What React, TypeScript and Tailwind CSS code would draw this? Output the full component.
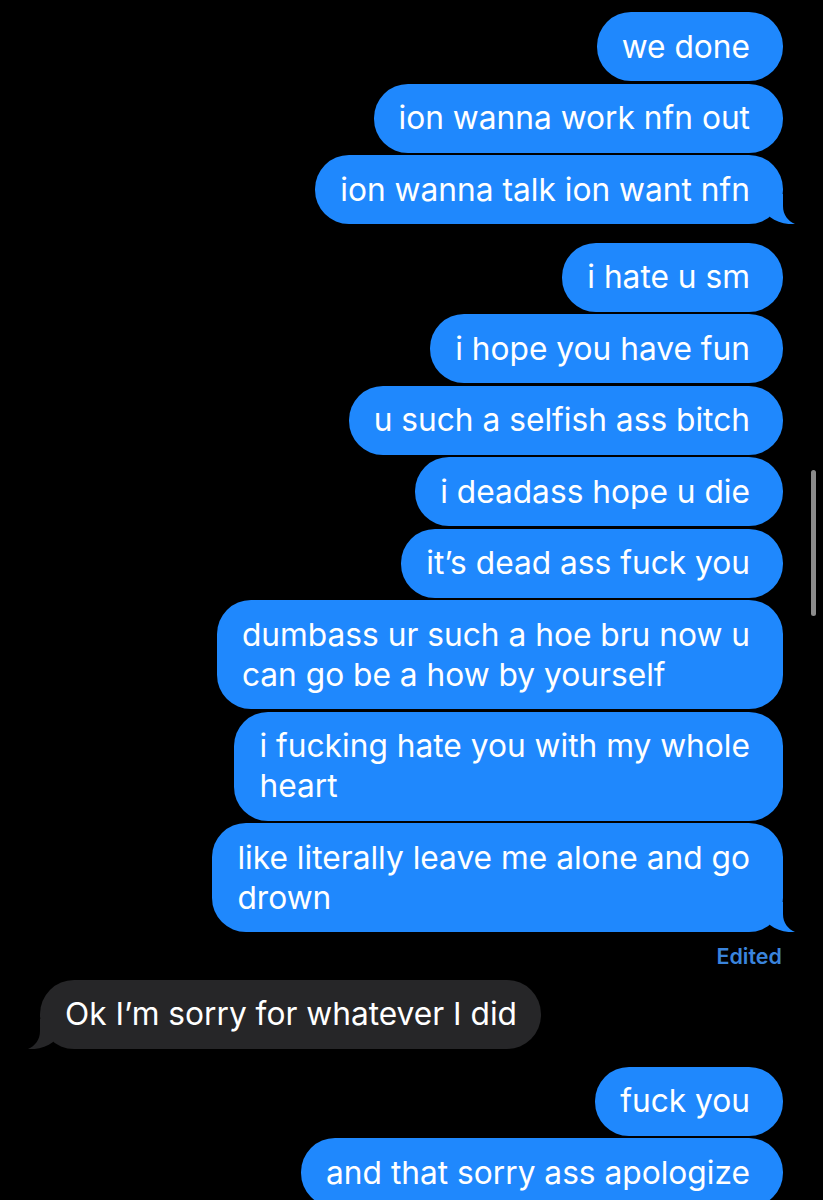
import React from 'react';

type Msg = { lines: string[]; tail?: boolean };

const groupsOut: Msg[][] = [
  [
    { lines: ['we done'] },
    { lines: ['ion wanna work nfn out'] },
    { lines: ['ion wanna talk ion want nfn'], tail: true },
  ],
  [
    { lines: ['i hate u sm'] },
    { lines: ['i hope you have fun'] },
    { lines: ['u such a selfish ass bitch'] },
    { lines: ['i deadass hope u die'] },
    { lines: ['it\u2019s dead ass fuck you'] },
    { lines: ['dumbass ur such a hoe bru now u', 'can go be a how by yourself'] },
    { lines: ['i fucking hate you with my whole', 'heart'] },
    { lines: ['like literally leave me alone and go', 'drown'], tail: true },
  ],
];

const Tail = ({ color, left }: { color: string; left?: boolean }) => (
  <svg
    viewBox="0 0 30 30"
    className={
      left
        ? 'absolute bottom-0 left-[-12px] w-[30px] h-[30px] -scale-x-100'
        : 'absolute bottom-0 right-[-12px] w-[30px] h-[30px]'
    }
  >
    <path d="M18 0 L18 12 C18 21 23 27 30 30 C22 30.8 12 28.5 5 23 L5 0 Z" fill={color} />
  </svg>
);

const Bubble = ({ msg }: { msg: Msg }) => (
  <div className="relative bg-[#1f88fd] rounded-[34px] pl-[25px] pr-[33px] py-[14.5px] text-white whitespace-nowrap">
    {msg.lines.map((l, i) => (
      <div key={i}>{l}</div>
    ))}
    {msg.tail && <Tail color="#1f88fd" />}
  </div>
);

export default function App() {
  return (
    <div
      className="relative w-[823px] h-[1200px] overflow-hidden bg-black px-[40px] pt-[12px] text-[31.7px] leading-[40px]"
      style={{ fontFamily: 'Inter, "Noto Sans", sans-serif' }}
    >
      <div className="flex flex-col items-end gap-[2.5px]">
        {groupsOut[0].map((m, i) => (
          <Bubble key={i} msg={m} />
        ))}
      </div>
      <div className="flex flex-col items-end gap-[2.5px] mt-[18.5px]">
        {groupsOut[1].map((m, i) => (
          <Bubble key={i} msg={m} />
        ))}
      </div>
      <div className="text-right text-[21.5px] leading-[24px] font-semibold text-[#3a84dc] mt-[11.5px] mr-[1px]">
        Edited
      </div>
      <div className="flex mt-[12px]">
        <div className="relative bg-[#262628] rounded-[34px] pl-[25px] pr-[24px] py-[14.5px] text-white whitespace-nowrap">
          Ok I’m sorry for whatever I did
          <Tail color="#262628" left />
        </div>
      </div>
      <div className="flex flex-col items-end gap-[2.5px] mt-[18px]">
        <Bubble msg={{ lines: ['fuck you'] }} />
        <Bubble msg={{ lines: ['and that sorry ass apologize'] }} />
      </div>
      <div className="absolute left-[811px] top-[470px] w-[5px] h-[146px] rounded-full bg-[#8c8c8c]" />
    </div>
  );
}
